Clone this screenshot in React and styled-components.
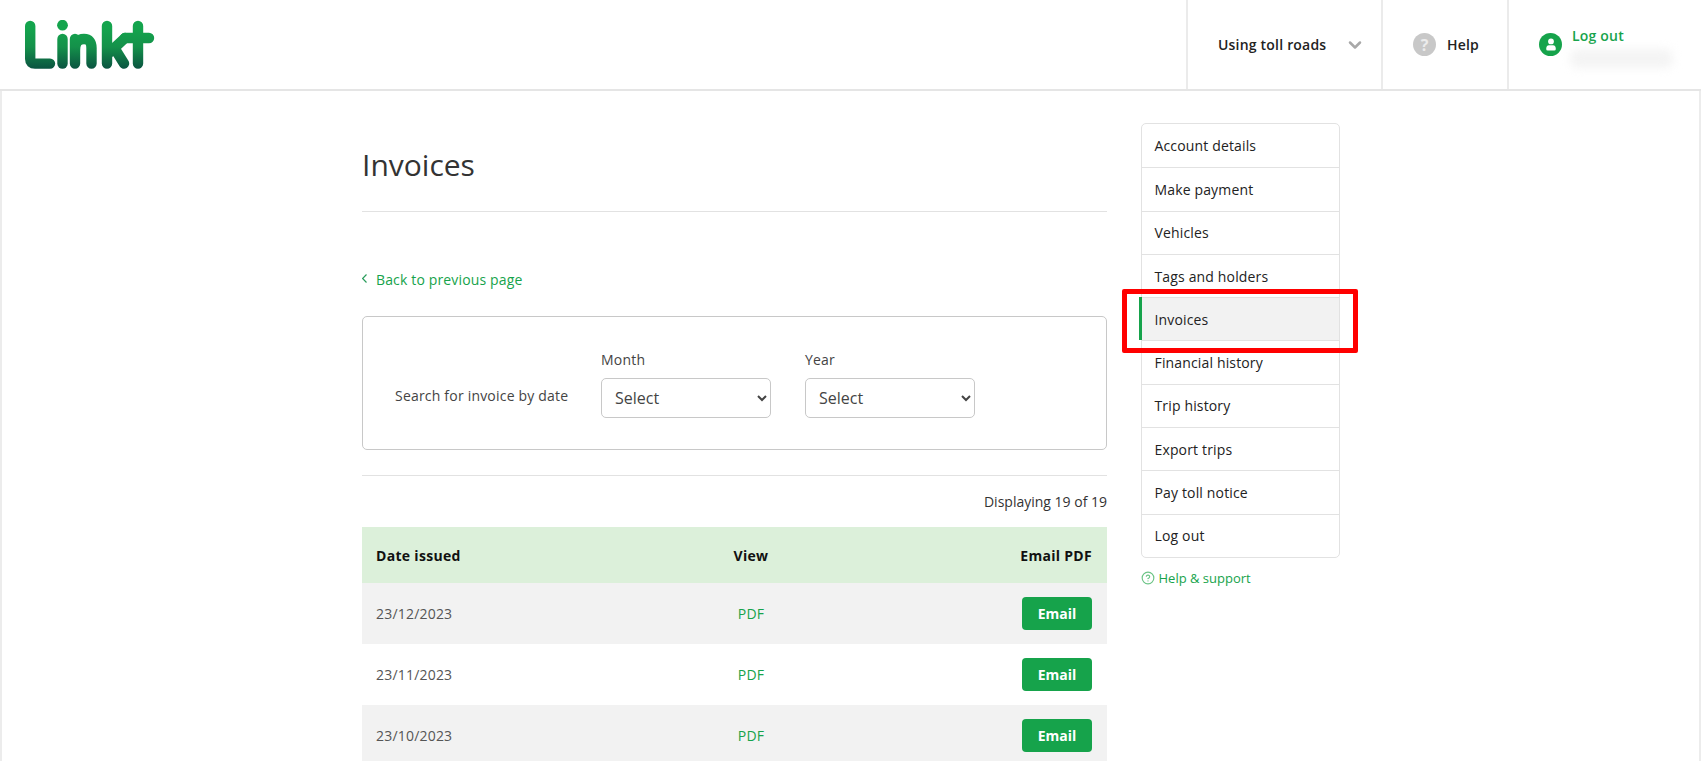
import React from 'react';
import styled, { createGlobalStyle } from 'styled-components';
import { CircleHelp, ChevronDown } from 'lucide-react';

const GlobalStyle = createGlobalStyle`
  html, body {
    margin: 0;
    padding: 0;
    height: 761px;
    overflow: hidden;
    background: #fff;
    font-family: "Open Sans", "Liberation Sans", sans-serif;
    color: #333;
  }
  * { box-sizing: border-box; }
`;

const Header = styled.header`
  display: flex;
  justify-content: space-between;
  height: 91px;
  border-bottom: 2px solid #e5e5e5;
  padding-left: 25px;
`;

const LogoLink = styled.a`
  display: block;
  padding-top: 20px;
`;

const HeaderNav = styled.nav`
  display: flex;
`;

const HeaderCell = styled.div`
  display: flex;
  align-items: center;
  width: ${props => props.width};
  padding-left: ${props => props.pad};
  border-left: 2px solid #ebebeb;
`;

const NavLabel = styled.span`
  font-size: 14px;
  font-weight: 600;
  color: #222;
  letter-spacing: 0.2px;
`;

const Chevron = styled(ChevronDown)`
  color: #a8a8a8;
  margin-left: 19px;
`;

const RoundIcon = styled.span`
  display: flex;
  align-items: center;
  justify-content: center;
  width: 23px;
  height: 23px;
  border-radius: 50%;
  background: ${props => props.color};
  color: ${props => props.ink || '#fff'};
  font-size: 16px;
  font-weight: 700;
  margin-right: ${props => props.gap};
`;

const AccountInfo = styled.div`
  display: flex;
  flex-direction: column;
  margin-top: 6px;
`;

const LogOutLink = styled.a`
  font-size: 14px;
  line-height: 17px;
  font-weight: 600;
  letter-spacing: 0.2px;
  color: #16a34b;
`;

const BlurredName = styled.div`
  width: 103px;
  height: 19px;
  margin-top: 5px;
  margin-left: -2px;
  border-radius: 8px;
  background: #f4f4f4;
  filter: blur(5px);
`;

const PageFrame = styled.div`
  display: flex;
  gap: 33.5px;
  height: 670px;
  padding: 32px 0 0 360px;
  border-left: 2px solid #ececec;
  border-right: 2px solid #ececec;
  overflow: hidden;
`;

const Main = styled.main`
  width: 745px;
  flex: none;
`;

const Title = styled.h1`
  margin: 0;
  height: 89px;
  padding-top: 21px;
  font-size: 30px;
  line-height: 41px;
  font-weight: 400;
  color: #333;
  border-bottom: 1px solid #e2e2e2;
`;

const BackLink = styled.a`
  display: flex;
  align-items: center;
  gap: 9px;
  margin-top: 57px;
  height: 20px;
  font-size: 14px;
  letter-spacing: 0.15px;
  color: #16a34b;
`;

const BackArrow = styled.svg`
  flex: none;
  margin-top: -2px;
`;

const SearchBox = styled.form`
  display: flex;
  align-items: flex-end;
  height: 134px;
  margin-top: 27px;
  padding: 0 0 31px 32px;
  border: 1px solid #c8c8c8;
  border-radius: 5px;
`;

const SearchLabel = styled.span`
  width: 206px;
  padding-bottom: 13px;
  font-size: 14px;
  letter-spacing: 0.2px;
  color: #444;
`;

const Field = styled.label`
  display: flex;
  flex-direction: column;
  width: 170px;
  margin-right: 34px;
  font-size: 14px;
  color: #444;
`;

const FieldName = styled.span`
  margin-bottom: 9px;
  line-height: 19px;
  letter-spacing: 0.2px;
`;

const Select = styled.select`
  width: 170px;
  height: 40px;
  padding-left: 9px;
  font-family: inherit;
  font-size: 16px;
  color: #444;
  background: #fff;
  border: 1px solid #c8c8c8;
  border-radius: 5px;
`;

const Rule = styled.hr`
  margin: 25px 0 0;
  border: 0;
  border-top: 1px solid #e2e2e2;
`;

const Count = styled.div`
  height: 51px;
  padding-top: 16px;
  text-align: right;
  font-size: 14px;
  line-height: 19px;
  color: #333;
`;

const Row = styled.div`
  display: grid;
  grid-template-columns: 276px 198px 1fr;
  align-items: center;
  height: ${props => (props.head ? '56px' : '61px')};
  padding: 0 15px 0 14px;
  background: ${props => (props.head ? '#dcf0da' : props.odd ? '#f2f2f2' : '#fff')};
`;

const HeadCell = styled.div`
  font-size: 14px;
  font-weight: 700;
  letter-spacing: 0.3px;
  color: #111;
  text-align: ${props => props.align || 'left'};
`;

const DateCell = styled.div`
  font-size: 14px;
  letter-spacing: 0.2px;
  color: #555;
`;

const PdfLink = styled.a`
  font-size: 14px;
  letter-spacing: 0.2px;
  color: #16a34b;
  text-align: center;
`;

const EmailButton = styled.button`
  justify-self: end;
  width: 70px;
  height: 33px;
  font-family: inherit;
  font-size: 14px;
  font-weight: 700;
  color: #fff;
  background: #16a34b;
  border: 0;
  border-radius: 4px;
`;

const Sidebar = styled.aside`
  position: relative;
  width: 199px;
  flex: none;
`;

const SideMenu = styled.ul`
  margin: 0;
  padding: 0;
  list-style: none;
  border: 1px solid #e2e2e2;
  border-radius: 5px;
`;

const SideItem = styled.li`
  display: flex;
  align-items: center;
  height: 43.3px;
  padding-left: 13px;
  font-size: 14px;
  letter-spacing: 0.15px;
  color: #222;
  background: ${props => (props.active ? '#f2f2f2' : 'transparent')};
  border-top: ${props => (props.first ? '0' : '1px solid #e2e2e2')};
  box-shadow: ${props => (props.active ? '-3px 0 0 #16a34b' : 'none')};
`;

const Highlight = styled.div`
  position: absolute;
  left: -19px;
  top: 166px;
  width: 236px;
  height: 64px;
  border: 5px solid #ff0000;
  border-radius: 2px;
  pointer-events: none;
`;

const HelpSupport = styled.a`
  display: flex;
  align-items: center;
  gap: 4px;
  margin-top: 11px;
  font-size: 13px;
  color: #16a34b;
`;

const menu = [
  'Account details', 'Make payment', 'Vehicles', 'Tags and holders', 'Invoices',
  'Financial history', 'Trip history', 'Export trips', 'Pay toll notice', 'Log out',
];

const invoices = ['23/12/2023', '23/11/2023', '23/10/2023'];

const Logo = () => (
  <svg width="130" height="50" viewBox="0 0 130 50" aria-label="Linkt">
    <defs>
      <linearGradient id="linkt" gradientUnits="userSpaceOnUse" x1="0" y1="8" x2="0" y2="50">
        <stop offset="0" stopColor="#14a44d" />
        <stop offset="0.45" stopColor="#14914a" />
        <stop offset="1" stopColor="#0a5040" />
      </linearGradient>
    </defs>
    <g fill="none" stroke="url(#linkt)" strokeWidth="10.4" strokeLinecap="round" strokeLinejoin="round">
      <path d="M5.2 6 V39 Q5.2 43.6 10 43.6 H25" />
      <path d="M37.5 19 V43.6" />
      <path d="M50 43.6 V19 M50 30 Q50 19 59 19 Q66.5 19 66.5 28 V43.6" />
      <path d="M82 6 V43.6 M84 33 L100 18 M90 29 L99 43.6" />
      <path d="M113 6 V43.6 M100 18 H124" />
    </g>
    <circle cx="37.5" cy="5.2" r="5.4" fill="#14a44d" />
  </svg>
);

// solid head and shoulders, the lucide one is only an outline
const UserGlyph = () => (
  <svg width="12" height="13" viewBox="0 0 12 13" fill="#fff">
    <circle cx="6" cy="3.4" r="2.9" />
    <path d="M1.2 11 Q1.2 7.2 4 7.2 H8 Q10.8 7.2 10.8 11 Q10.8 12.6 9.2 12.6 H2.8 Q1.2 12.6 1.2 11 Z" />
  </svg>
);

export default function App() {
  return (
    <>
      <GlobalStyle />
      <Header>
        <LogoLink><Logo /></LogoLink>
        <HeaderNav>
          <HeaderCell width="195px" pad="30px">
            <NavLabel>Using toll roads</NavLabel>
            <Chevron size={20} strokeWidth={3} />
          </HeaderCell>
          <HeaderCell width="126px" pad="30px">
            <RoundIcon color="#c8c8c8" ink="#ececec" gap="11px">?</RoundIcon>
            <NavLabel>Help</NavLabel>
          </HeaderCell>
          <HeaderCell width="194px" pad="30px">
            <RoundIcon color="#16a34b" gap="10px"><UserGlyph /></RoundIcon>
            <AccountInfo>
              <LogOutLink>Log out</LogOutLink>
              <BlurredName />
            </AccountInfo>
          </HeaderCell>
        </HeaderNav>
      </Header>
      <PageFrame>
        <Main>
          <Title>Invoices</Title>
          <BackLink>
            <BackArrow width="5" height="9" viewBox="0 0 5 9" fill="none" stroke="#2a9d5c" strokeWidth="1.2">
              <path d="M4.5 .5 L.6 4.5 L4.5 8.5" />
            </BackArrow>
            Back to previous page
          </BackLink>
          <SearchBox>
            <SearchLabel>Search for invoice by date</SearchLabel>
            <Field>
              <FieldName>Month</FieldName>
              <Select><option>Select</option></Select>
            </Field>
            <Field>
              <FieldName>Year</FieldName>
              <Select><option>Select</option></Select>
            </Field>
          </SearchBox>
          <Rule />
          <Count>Displaying 19 of 19</Count>
          <Row head>
            <HeadCell>Date issued</HeadCell>
            <HeadCell align="center">View</HeadCell>
            <HeadCell align="right">Email PDF</HeadCell>
          </Row>
          {invoices.map((date, i) => (
            <Row key={date} odd={i % 2 === 0}>
              <DateCell>{date}</DateCell>
              <PdfLink>PDF</PdfLink>
              <EmailButton type="button">Email</EmailButton>
            </Row>
          ))}
        </Main>
        <Sidebar>
          <SideMenu>
            {menu.map((item, i) => (
              <SideItem key={item} first={i === 0} active={item === 'Invoices'}>{item}</SideItem>
            ))}
          </SideMenu>
          <Highlight />
          <HelpSupport><CircleHelp size={14} color="#6cc486" />Help &amp; support</HelpSupport>
        </Sidebar>
      </PageFrame>
    </>
  );
}
